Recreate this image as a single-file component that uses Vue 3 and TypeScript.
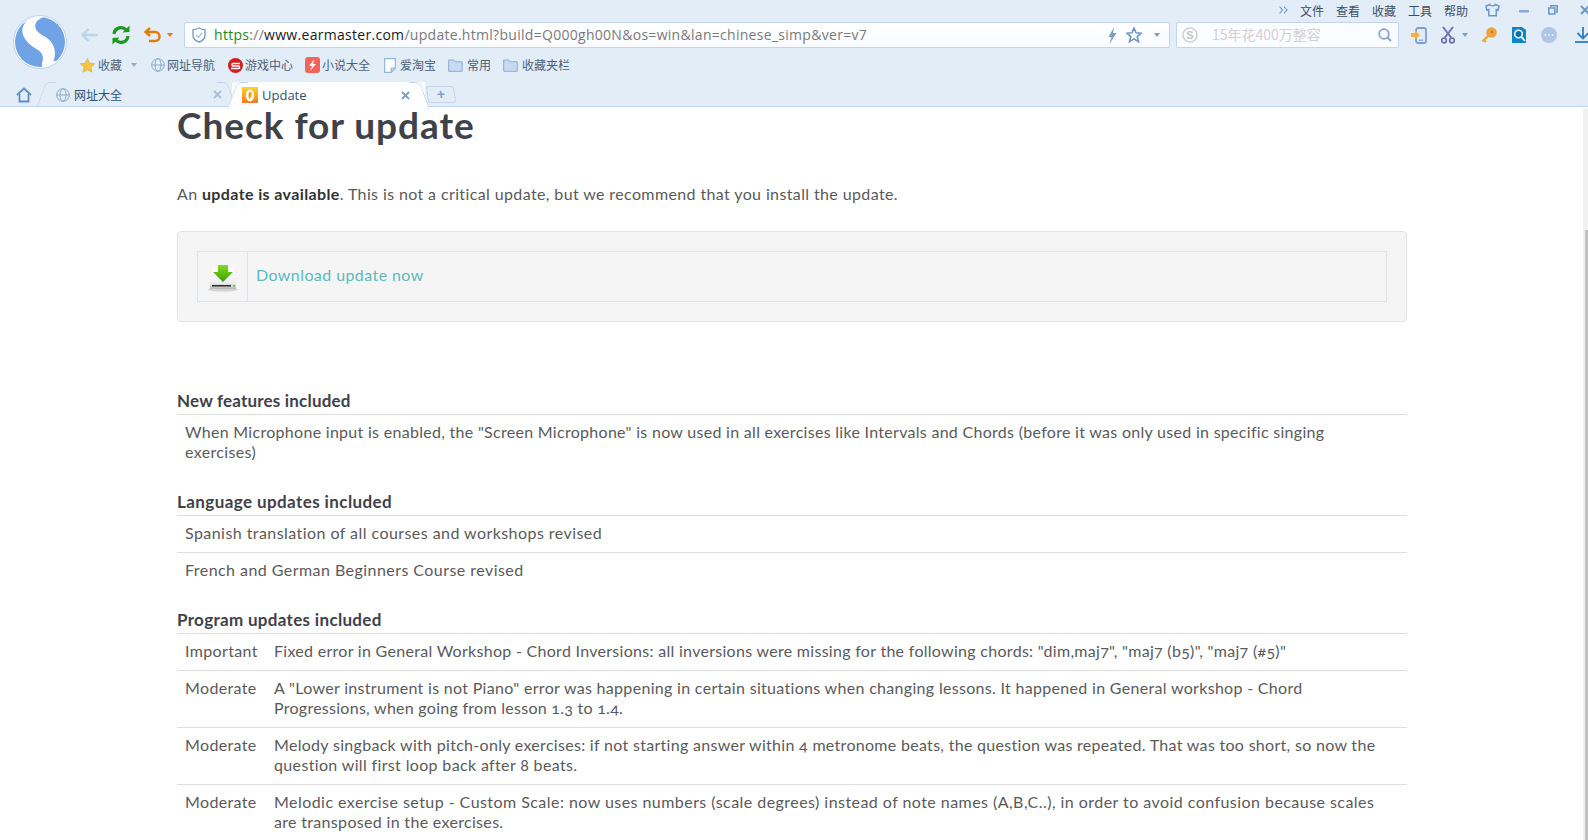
<script setup lang="ts">
interface Line { t: string; ls: number }
interface Row { level?: string; lines: Line[] }
const menu = ['文件', '查看', '收藏', '工具', '帮助']
const features: Row[] = [
  { lines: [{ t: 'When Microphone input is enabled, the "Screen Microphone" is now used in all exercises like Intervals and Chords (before it was only used in specific singing', ls: 0.29 }, { t: 'exercises)', ls: 0.35 }] },
]
const languages: Row[] = [
  { lines: [{ t: 'Spanish translation of all courses and workshops revised', ls: 0.44 }] },
  { lines: [{ t: 'French and German Beginners Course revised', ls: 0.45 }] },
]
const program: Row[] = [
  { level: 'Important', lines: [{ t: 'Fixed error in General Workshop - Chord Inversions: all inversions were missing for the following chords: "dim,maj7", "maj7 (b5)", "maj7 (#5)"', ls: 0.29 }] },
  { level: 'Moderate', lines: [{ t: 'A "Lower instrument is not Piano" error was happening in certain situations when changing lessons. It happened in General workshop - Chord', ls: 0.31 }, { t: 'Progressions, when going from lesson 1.3 to 1.4.', ls: 0.27 }] },
  { level: 'Moderate', lines: [{ t: 'Melody singback with pitch-only exercises: if not starting answer within 4 metronome beats, the question was repeated. That was too short, so now the', ls: 0.3 }, { t: 'question will first loop back after 8 beats.', ls: 0.35 }] },
  { level: 'Moderate', lines: [{ t: 'Melodic exercise setup - Custom Scale: now uses numbers (scale degrees) instead of note names (A,B,C..), in order to avoid confusion because scales', ls: 0.45 }, { t: 'are transposed in the exercises.', ls: 0.32 }] },
]
const sections = [
  { title: 'New features included', ls: 0.19, rows: features },
  { title: 'Language updates included', ls: 0.41, rows: languages },
  { title: 'Program updates included', ls: 0.32, rows: program },
]
</script>

<template>
  <div class="window">
    <header class="chrome">
      <div class="top">
        <svg class="logo" viewBox="0 0 54 54">
          <defs><clipPath id="logo-disc"><circle cx="27" cy="27" r="25" /></clipPath></defs>
          <circle cx="27" cy="27" r="26.500" fill="#fff" stroke="#b9d0ee" />
          <g clip-path="url(#logo-disc)" fill="#6fa3e6">
            <path d="M34 1C26 3 21.500 7 22.300 12 23 17 29 20 34 23c7 5 10 13 6.500 23L60 46V0H34z" />
            <path d="M14 6C9 10 8 17 11 22c3 6 9 10 14 13 5 3 6 8 4 13v12H-5V6z" />
          </g>
        </svg>
        <div class="menu">
          <svg class="more" viewBox="0 0 9 8"><path d="m.5.500 3 3.500-3 3.500M5 .500 8 4 5 7.500" fill="none" stroke="#6a8fbd" stroke-width="1.100" /></svg>
          <span v-for="m in menu" :key="m" class="menu-item">{{ m }}</span>
          <svg class="shirt" viewBox="0 0 16 14"><path d="M5 1 1 3l1 4 2-.5V13h8V6.500l2 .5 1-4-4-2c-.5 2-5.500 2-6 0z" fill="none" stroke="#6f97c6" stroke-width="1.600" /></svg>
          <svg class="win-min" viewBox="0 0 10 3"><rect width="10" height="2.500" fill="#86a8d2" /></svg>
          <svg class="win-res" viewBox="0 0 10 10"><path d="M3 2V.8h6.200V7H8M.8 3h6v6h-6z" fill="none" stroke="#6f97c6" stroke-width="1.600" /></svg>
          <svg class="win-close" viewBox="0 0 10 10"><path d="m1 1 8 8M9 1 1 9" stroke="#6f97c6" stroke-width="2" /></svg>
        </div>
        <div class="nav">
          <svg class="back" viewBox="0 0 17 14"><path d="M7.500 1 1.500 7l6 6M2 7h15" fill="none" stroke="#bcd3ee" stroke-width="2.400" /></svg>
          <svg class="refresh" viewBox="0 0 20 20">
            <path d="M3 9c.8-7 9-8 12-4" fill="none" stroke="#1d9a1d" stroke-width="3.200" />
            <path d="m11.500 7.500 7-.5V.5z" fill="#1d9a1d" />
            <path d="M17 11c-.8 7-9 8-12 4" fill="none" stroke="#1d9a1d" stroke-width="3.200" />
            <path d="m8.500 12.500-7 .5v6.500z" fill="#1d9a1d" />
          </svg>
          <svg class="undo" viewBox="0 0 17 17"><path d="M6 1 1.500 5 6 9M2 5h9c6 0 6 9 0 9H5" fill="none" stroke="#e07c07" stroke-width="2.400" /></svg>
          <i class="caret orange"></i>
          <div class="address">
            <svg class="shield" viewBox="0 0 14 16"><path d="M7 1c2 1.200 4 1.700 6 1.700V8c0 3.500-3 6-6 7-3-1-6-3.500-6-7V2.700C3 2.700 5 2.200 7 1z" fill="#fff" stroke="#7d9cc4" stroke-width="1.400" /><path d="m4 8 2.500 2.500L10 6" fill="none" stroke="#aebfd8" stroke-width="1.300" /></svg>
            <span class="url"><span class="https">https</span><span class="gray">://</span><span class="host">www.earmaster.com</span><span class="gray">/update.html?build=Q000gh00N&amp;os=win&amp;lan=chinese_simp&amp;ver=v7</span></span>
            <svg class="bolt" viewBox="0 0 9 17"><path d="M6 0 .5 10h3L1.500 17 8.500 6h-3.500z" fill="#7d9fca" /></svg>
            <svg class="addr-star" viewBox="0 0 16 16"><path d="m8 1 2 4.800 5.200.4-4 3.400 1.300 5.100L8 11.900l-4.500 2.800 1.300-5.100-4-3.400L6 5.800z" fill="#fff" stroke="#6f97c6" stroke-width="1.600" /></svg>
            <i class="caret blue"></i>
          </div>
          <div class="search">
            <svg class="sogou" viewBox="0 0 16 16"><circle cx="8" cy="8" r="7" fill="#fff" stroke="#cfcfcf" stroke-width="1.500" /><text x="8" y="12" text-anchor="middle" font-size="11" font-weight="700" fill="#c4c4c4" font-family="Liberation Sans, sans-serif">S</text></svg>
            <span class="placeholder">15年花400万整容</span>
            <svg class="lens" viewBox="0 0 14 14"><circle cx="6" cy="6" r="4.800" fill="none" stroke="#85a5cc" stroke-width="1.800" /><path d="m9.500 9.500 3.500 3.500" stroke="#85a5cc" stroke-width="2" /></svg>
          </div>
          <svg class="phone" viewBox="0 0 16 17"><rect x="5" y="1" width="10" height="15" rx="2" fill="#e2ecf7" stroke="#7c9fd0" stroke-width="1.800" /><path d="M8 13.200h4" stroke="#7c9fd0" stroke-width="1.300" /><path d="M0 6h4V3l5 5-5 5v-3H0z" fill="#f3b13d" /></svg>
          <svg class="scissors" viewBox="0 0 14 18"><path d="M2 1l8.500 11M12 1 3.500 12" stroke="#6b72b8" stroke-width="2" /><circle cx="3" cy="14.500" r="2.300" fill="none" stroke="#6b72b8" stroke-width="1.800" /><circle cx="11" cy="14.500" r="2.300" fill="none" stroke="#6b72b8" stroke-width="1.800" /></svg>
          <i class="caret blue small"></i>
          <svg class="key" viewBox="0 0 16 16"><circle cx="10.500" cy="5.500" r="5.300" fill="#f0a33c" /><circle cx="11" cy="5" r="1.200" fill="#b9782a" /><path d="M7 9 1.500 14.500M3 13l2 2" stroke="#f0a33c" stroke-width="2.400" /></svg>
          <svg class="blue-search" viewBox="0 0 16 16"><path d="M1 0h10l4 3v13H1z" fill="#0d86c9" /><circle cx="7.500" cy="7" r="3.800" fill="#0a70ad" stroke="#fff" stroke-width="1.500" /><path d="m10.500 10 3.500 4" stroke="#fff" stroke-width="1.800" /></svg>
          <svg class="dots" viewBox="0 0 16 16"><circle cx="8" cy="8" r="8" fill="#b0c6e4" /><circle cx="4.500" cy="8" r=".9" fill="#e8eff8" /><circle cx="8" cy="8" r=".9" fill="#e8eff8" /><circle cx="11.500" cy="8" r=".9" fill="#e8eff8" /></svg>
          <svg class="dl" viewBox="0 0 16 16"><path d="M8 0v11M2.500 6 8 11.500 13.500 6" fill="none" stroke="#2f7fc4" stroke-width="1.800" /><path d="M0 15h16" stroke="#2f7fc4" stroke-width="1.800" /></svg>
        </div>
        <div class="bookmarks">
          <svg class="bm-star" viewBox="0 0 16 16"><path d="m8 .5 2.300 5 5.400.6-4 3.700 1.100 5.400L8 12.500l-4.800 2.700 1.100-5.400-4-3.700 5.400-.6z" fill="#f5c542" stroke="#dca22c" stroke-width=".6" /></svg>
          <span class="bm first">收藏</span>
          <i class="caret gray-caret"></i>
          <svg class="globe g1" viewBox="0 0 14 14"><g fill="none" stroke="#8eaacb" stroke-width="1"><circle cx="7" cy="7" r="6.300" /><ellipse cx="7" cy="7" rx="3" ry="6.300" /><path d="M.7 7h12.600" /></g></svg>
          <span class="bm">网址导航</span>
          <svg class="game" viewBox="0 0 15 15"><circle cx="7.500" cy="7.500" r="7.500" fill="#cf1f1f" /><path d="M12 5.500H5C3.500 5.500 3.500 8 5 8h5.500c1.500 0 1.500 2.500 0 2.500H3" fill="none" stroke="#fff" stroke-width="1.400" /></svg>
          <span class="bm">游戏中心</span>
          <svg class="novel" viewBox="0 0 15 16"><rect width="15" height="16" rx="3" fill="#f4635a" /><path d="M9.500 2 4 9h3l-2 5 6-7H8z" fill="#fff" /></svg>
          <span class="bm">小说大全</span>
          <svg class="doc" viewBox="0 0 12 15"><path d="M.7.7h10.600V10l-4 4.300H.7zM11 10H7.300v4" fill="#fff" stroke="#8fb5e4" stroke-width="1.200" /></svg>
          <span class="bm">爱淘宝</span>
          <svg class="folder f1" viewBox="0 0 15 13"><path d="M.7 12.300V1h5l1.500 1.800h7v9.500z" fill="#c7daf2" stroke="#8cabd0" /></svg>
          <span class="bm">常用</span>
          <svg class="folder f2" viewBox="0 0 15 13"><path d="M.7 12.300V1h5l1.500 1.800h7v9.500z" fill="#c7daf2" stroke="#8cabd0" /></svg>
          <span class="bm">收藏夹栏</span>
        </div>
      </div>
      <div class="tabs">
        <svg class="home" viewBox="0 0 16 16"><path d="M1 8 8 1.500 15 8M3.500 7v7.500h9V7" fill="none" stroke="#5f8fc0" stroke-width="1.800" /></svg>
        <div class="tab inactive">
          <svg class="globe" viewBox="0 0 14 14"><g fill="none" stroke="#8eaacb" stroke-width="1"><circle cx="7" cy="7" r="6.300" /><ellipse cx="7" cy="7" rx="3" ry="6.300" /><path d="M.7 7h12.600" /></g></svg>
          <span class="tab-title">网址大全</span>
          <svg class="x" viewBox="0 0 9 9"><path d="m1 1 7 7M8 1 1 8" stroke="#a9bfdb" stroke-width="1.800" /></svg>
        </div>
        <div class="tab active">
          <svg class="fav" viewBox="0 0 16 16">
            <defs><linearGradient id="fav-bg" x1="0" y1="0" x2="0" y2="1"><stop offset="0" stop-color="#fbd52a" /><stop offset="1" stop-color="#ef7a24" /></linearGradient></defs>
            <rect width="16" height="16" fill="url(#fav-bg)" />
            <ellipse cx="8" cy="8.500" rx="4.200" ry="6" fill="#fff6e2" />
            <path d="M8 5c1.800 0 2 2.500 1 4.500-.5 1-1 1.800-1.500 2.500-.7-1-1.200-2.500-1-4C6.600 6.500 7 5 8 5z" fill="#f0982c" />
          </svg>
          <span class="tab-title latin">Update</span>
          <svg class="x" viewBox="0 0 9 9"><path d="m1 1 7 7M8 1 1 8" stroke="#7d9fca" stroke-width="1.800" /></svg>
        </div>
        <div class="new-tab">+</div>
      </div>
    </header>

    <div class="viewport">
      <main class="content">
        <h1>Check for update</h1>
        <p class="intro">An <b>update is available</b>. This is not a critical update, but we recommend that you install the update.</p>
        <div class="well">
          <div class="dl-box">
            <div class="dl-icon">
              <svg viewBox="0 0 32 30" width="32" height="30">
                <defs>
                  <linearGradient id="drive" x1="0" y1="0" x2="0" y2="1"><stop offset="0" stop-color="#fdfdfd" /><stop offset=".7" stop-color="#eeeeee" /><stop offset="1" stop-color="#b8b8b8" /></linearGradient>
                  <linearGradient id="arrow" x1="0" y1="0" x2="0" y2="1"><stop offset="0" stop-color="#86d81e" /><stop offset="1" stop-color="#37a006" /></linearGradient>
                </defs>
                <ellipse cx="16" cy="27.500" rx="15" ry="2" fill="#d4d4d4" />
                <path d="M5 6h22l2 15v6H3v-6z" fill="url(#drive)" />
                <rect x="5" y="23" width="19" height="1.500" fill="#2d2d2d" />
                <rect x="26" y="23" width="2" height="1.500" fill="#6cc02a" />
                <path d="M11 3h10v7h5L16 20 6 10h5z" fill="url(#arrow)" />
              </svg>
            </div>
            <a class="dl-link">Download update now</a>
          </div>
        </div>
        <section v-for="s in sections" :key="s.title" class="block">
          <h4 :style="{ letterSpacing: s.ls + 'px' }">{{ s.title }}</h4>
          <div v-for="(r, i) in s.rows" :key="i" class="row">
            <span v-if="r.level" class="level">{{ r.level }}</span>
            <div class="text"><div v-for="(l, j) in r.lines" :key="j" :style="{ letterSpacing: l.ls + 'px' }">{{ l.t }}</div></div>
          </div>
        </section>
      </main>
      <div class="scrollbar"><div class="thumb"></div></div>
    </div>
  </div>
</template>

<style>
html, body { margin: 0; overflow: hidden; }
</style>

<style scoped>
.window { width: 1588px; height: 840px; display: flex; flex-direction: column; overflow: hidden; background: #fff; }
svg { display: block; flex: none; }
.chrome { height: 107px; box-sizing: border-box; background: #e3edf8; border-bottom: 1px solid #c2d5ec; font-family: "Noto Sans CJK SC", sans-serif; font-size: 12px; color: #4a617c; flex: none; }
.top { display: grid; grid-template-columns: 70px 1fr; grid-template-rows: 22px 26px 30px; min-width: 0; }
.logo { grid-row: 1 / 4; grid-column: 1; width: 54px; height: 54px; margin: 15px 0 0 13px; }
.menu { grid-column: 2; display: flex; align-items: center; height: 20px; }
.more { margin-left: 1209px; width: 9px; height: 8px; }
.menu-item { margin-left: 12px; width: 24px; white-space: nowrap; color: #3c4f66; }
.shirt { width: 15px; height: 14px; margin-left: 17px; }
.win-min { width: 10px; height: 3px; margin: 3px 0 0 19px; }
.win-res { width: 10px; height: 10px; margin-left: 19px; }
.win-close { width: 10px; height: 10px; margin-left: 22px; }

.nav { grid-column: 2; display: flex; align-items: center; height: 26px; width: 1518px; }
.back { width: 17px; height: 14px; margin-left: 11px; }
.refresh { width: 20px; height: 20px; margin-left: 13px; }
.undo { width: 17px; height: 17px; margin-left: 13px; }
.caret { display: block; width: 0; height: 0; border-left: 3.5px solid transparent; border-right: 3.5px solid transparent; border-top: 4px solid #8fabd0; flex: none; }
.caret.orange { border-top-color: #e07c07; margin-left: 6px; }
.address { margin-left: 11px; width: 986px; height: 26px; flex: none; box-sizing: border-box; display: flex; align-items: center; background: linear-gradient(#fff, #f9fbfe); border: 1px solid #c3d5ec; border-radius: 2px; }
.shield { width: 14px; height: 16px; margin-left: 7px; }
.url { margin: 0 0 2px 8px; width: 894px; flex: none; font: 14px "Open Sans", sans-serif; white-space: nowrap; overflow: hidden; letter-spacing: .29px; }
.https { color: #1c8a1c; }
.gray { color: #7a7a7a; }
.host { color: #1a1a1a; }
.bolt { width: 9px; height: 17px; }
.addr-star { width: 16px; height: 16px; margin-left: 9px; }
.caret.blue { margin-left: 12px; border-top-color: #7d9fca; }
.search { margin-left: 6px; width: 223px; height: 26px; flex: none; box-sizing: border-box; display: flex; align-items: center; background: #fbfcfe; border: 1px solid #c3d5ec; border-radius: 2px; }
.sogou { width: 16px; height: 16px; margin-left: 5px; }
.placeholder { margin: 0 0 2px 14px; width: 166px; flex: none; color: #d2d2d2; font-size: 14px; white-space: nowrap; }
.lens { width: 14px; height: 14px; }
.phone { width: 16px; height: 17px; margin-left: 12px; }
.scissors { width: 14px; height: 18px; margin-left: 14px; }
.caret.small { margin-left: 7px; }
.key { width: 16px; height: 16px; margin-left: 13px; }
.blue-search { width: 16px; height: 16px; margin-left: 14px; }
.dots { width: 16px; height: 16px; margin-left: 14px; }
.dl { width: 16px; height: 16px; margin-left: 18px; }

.bookmarks { grid-column: 2; display: flex; align-items: center; height: 30px; padding-top: 4px; box-sizing: border-box; }
.bm-star { width: 15px; height: 15px; margin-left: 10px; }
.bm { margin-left: 2px; white-space: nowrap; line-height: 16px; }
.bm.first { margin-left: 3px; }
.gray-caret { margin-left: 9px; }
.globe { width: 14px; height: 14px; }
.g1 { margin-left: 14px; }
.game { width: 15px; height: 15px; margin-left: 13px; }
.novel { width: 15px; height: 16px; margin-left: 12px; }
.doc { width: 12px; height: 15px; margin-left: 14px; margin-right: 2px; }
.folder { width: 15px; height: 13px; margin-right: 2px; }
.f1 { margin-left: 12px; }
.f2 { margin-left: 12px; }

.tabs { display: flex; height: 26px; margin-top: 3px; align-items: flex-end; }
.home { width: 16px; height: 16px; margin: 0 0 4px 16px; }
.tab { position: relative; display: flex; align-items: center; height: 25px; box-sizing: border-box; }
.tab::before, .tab::after { content: ""; position: absolute; top: 0; bottom: -1px; width: 10px; border-top: 1px solid #c2d5ec; }
.tab::before { left: 0; border-left: 1px solid #c2d5ec; border-top-left-radius: 5px; transform: skewX(-20deg); }
.tab::after { right: 0; border-right: 1px solid #c2d5ec; border-top-right-radius: 5px; transform: skewX(20deg); }
.inactive { width: 191px; margin-left: 9px; padding-left: 15px; }
.inactive .tab-title { margin-left: 4px; width: 139px; color: #2f5174; }
.active { width: 193px; padding-left: 10px; height: 26px; margin-bottom: -1px; background: #fff; z-index: 1; }
.active::before, .active::after { background: #fff; z-index: -1; }
.fav { width: 16px; height: 16px; }
.latin { margin-left: 4px; width: 139px; font: 13px "Open Sans", sans-serif; color: #2f5174; }
.x { width: 9px; height: 9px; }
.new-tab { width: 28px; height: 17px; margin: 0 0 4px 2px; box-sizing: border-box; border: 1px solid #c2d5ec; border-radius: 3px; transform: skewX(8deg); text-align: center; font: bold 14px/15px "Liberation Sans", sans-serif; color: #7d9fca; }

.viewport { flex: 1; min-height: 0; display: flex; overflow: hidden; }
.content { flex: 1; padding-left: 177px; padding-right: 176px; font-family: Lato, sans-serif; font-size: 16px; line-height: 20px; color: #5a5a5a; font-variant-numeric: oldstyle-nums; min-width: 0; }
h1 { margin: 0; font-size: 37px; line-height: 36px; font-weight: 700; color: #3f4249; letter-spacing: .95px; }
.intro { margin: 41px 0 0; height: 20px; letter-spacing: .38px; }
.intro b { color: #333; font-weight: 700; }
.well { margin-top: 27px; height: 91px; box-sizing: border-box; padding: 19px; background: #f5f5f5; border: 1px solid #e3e3e3; border-radius: 4px; }
.dl-box { height: 51px; box-sizing: border-box; display: flex; align-items: center; border: 1px solid #dfe4ea; }
.dl-icon { width: 50px; height: 100%; box-sizing: border-box; border-right: 1px solid #dfe4ea; display: flex; align-items: center; justify-content: center; }
.dl-link { margin: 0 0 3px 8px; color: #5cb9bc; font-size: 16px; letter-spacing: .42px; }
.block { margin-top: 21px; }
.well + .block { margin-top: 69px; }
h4 { margin: 0; height: 24px; box-sizing: border-box; padding-bottom: 4px; line-height: 20px; font-size: 17px; font-weight: 700; color: #3f4249; border-bottom: 1px solid #ddd; }
.row { display: flex; padding: 7px 8px 9px; border-bottom: 1px solid #ddd; letter-spacing: .35px; }
.block:nth-of-type(-n+2) .row:last-child { border-bottom: 0; }
.level { width: 89px; flex: none; }
.text { white-space: nowrap; }
.scrollbar { width: 5px; flex: none; margin-top: 2px; background: #f0f0f0; }
.thumb { margin: 121px 0 0 2px; height: 620px; background: #c1c1c1; }
</style>
